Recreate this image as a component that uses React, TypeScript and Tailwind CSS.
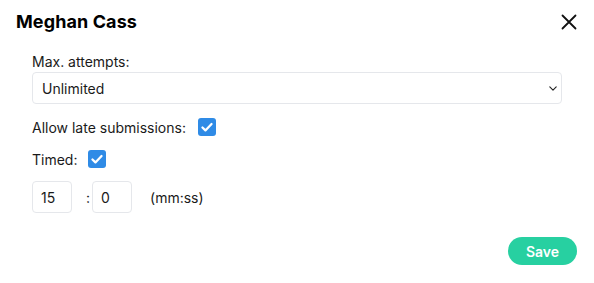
import { useState } from "react";

function Check({ checked, onChange }: { checked: boolean; onChange: () => void }) {
  return (
    <button
      type="button"
      onClick={onChange}
      className={`flex h-[18px] w-[18px] items-center justify-center rounded-[3px] ${
        checked ? "bg-[#2f8be6]" : "border border-gray-300 bg-white"
      }`}
    >
      {checked && (
        <svg viewBox="0 0 16 16" className="h-[14px] w-[14px]" fill="none">
          <path d="M2.8 8.6l3.4 3.3L13.2 4.6" stroke="white" strokeWidth="2.6" strokeLinecap="round" strokeLinejoin="round" />
        </svg>
      )}
    </button>
  );
}

export default function App() {
  const [late, setLate] = useState(true);
  const [timed, setTimed] = useState(true);

  return (
    <div className="relative h-[283px] w-[594px] bg-white text-[#1a1a1a]" style={{ fontFamily: "Inter, 'Noto Sans', sans-serif" }}>
      <div className="flex items-center justify-between pl-4 pr-[13px] pt-[10px]">
        <h2 className="text-[18px] font-bold leading-6 tracking-[0.1px] text-black">Meghan Cass</h2>
        <button type="button" aria-label="Close" className="flex h-6 w-6 items-center justify-center">
          <svg viewBox="0 0 16 16" className="h-4 w-4" fill="none">
            <path d="M1.5 1.5l13 13M14.5 1.5l-13 13" stroke="#111" strokeWidth="1.8" strokeLinecap="round" />
          </svg>
        </button>
      </div>

      <div className="px-8 pt-[18px] text-[14px]">
        <label className="block leading-5">Max. attempts:</label>
        <div className="relative">
          <select className="h-8 w-full appearance-none rounded-[4px] border border-gray-200 bg-white pl-[9px] text-[14px] outline-none">
            <option>Unlimited</option>
            <option>1</option>
            <option>2</option>
            <option>3</option>
          </select>
          <svg viewBox="0 0 10 6" className="pointer-events-none absolute right-[5px] top-[14px] h-[5px] w-[8px]" fill="none">
            <path d="M1 1l4 4 4-4" stroke="#222" strokeWidth="1.4" strokeLinecap="round" strokeLinejoin="round" />
          </svg>
        </div>

        <div className="mt-[13px] flex h-5 items-center gap-3">
          <span>Allow late submissions:</span>
          <Check checked={late} onChange={() => setLate(!late)} />
        </div>

        <div className="mt-[12px] flex h-5 items-center gap-[11px]">
          <span>Timed:</span>
          <Check checked={timed} onChange={() => setTimed(!timed)} />
        </div>

        <div className="mt-[12px] flex items-center">
          <input defaultValue="15" className="h-8 w-10 rounded-[4px] border border-gray-200 pl-2 text-[14px] outline-none" />
          <span className="ml-[14px] mr-[2px]">:</span>
          <input defaultValue="0" className="h-8 w-10 rounded-[4px] border border-gray-200 pl-2 text-[14px] outline-none" />
          <span className="ml-[18px]">(mm:ss)</span>
        </div>
      </div>

      <button
        type="button"
        className="absolute bottom-[18px] right-[17px] h-7 w-[69px] rounded-full bg-[#27d0a1] text-[14px] font-semibold text-white"
      >
        Save
      </button>
    </div>
  );
}
